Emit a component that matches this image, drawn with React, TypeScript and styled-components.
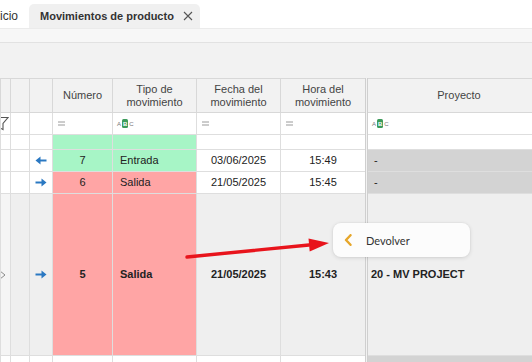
import React from "react";
import styled, { createGlobalStyle } from "styled-components";

const GlobalStyle = createGlobalStyle`
  html, body { margin: 0; padding: 0; background: #ffffff; }
  body { font-family: "Liberation Sans", Arial, sans-serif; color: #333; }
`;

const Page = styled.div`
  position: relative;
  width: 532px;
  height: 362px;
  overflow: hidden;
  display: flex;
  flex-direction: column;
  background: #f2f2f2;
`;

const TabBar = styled.div`
  flex: none;
  height: 29px;
  box-sizing: border-box;
  background: #ffffff;
  border-bottom: 1px solid #ebebeb;
  display: flex;
  align-items: flex-end;
  gap: 11px;
`;

const Tab = styled.div<{ $active?: boolean }>`
  height: 24px;
  display: flex;
  align-items: center;
  gap: 9px;
  font-size: ${(p) => (p.$active ? "11px" : "12px")};
  font-weight: ${(p) => (p.$active ? 700 : 400)};
  color: #333;
  white-space: nowrap;
  background: ${(p) => (p.$active ? "#f0f0f0" : "transparent")};
  border-radius: 5px 5px 0 0;
  padding: ${(p) => (p.$active ? "0 7px 0 11px" : "0")};
  margin-left: ${(p) => (p.$active ? "0" : "-10px")};
`;

const Strip = styled.div`
  flex: none;
  height: 14px;
  box-sizing: border-box;
  background: #f7f7f7;
  border-bottom: 1px solid #e2e2e2;
`;

const Toolbar = styled.div`
  flex: none;
  height: 35px;
  background: #f2f2f2;
`;

const Table = styled.table`
  border-collapse: collapse;
  table-layout: fixed;
  width: 550px;
  font-size: 11px;
  color: #222;
`;

const Row = styled.tr<{ $h: number }>`
  height: ${(p) => p.$h}px;
`;

const HeadCell = styled.th<{ $sep?: boolean }>`
  background: #f2f2f2;
  border: 1px solid #d8d8d8;
  ${(p) => (p.$sep ? "border-left: 3px double #cfcfcf;" : "")}
  font-weight: 400;
  font-size: 11px;
  line-height: 13px;
  color: #444;
  text-align: center;
  vertical-align: middle;
  padding: 0 2px;
  overflow: hidden;
`;

const Cell = styled.td<{
  $bg?: string;
  $bold?: boolean;
  $align?: string;
  $sep?: boolean;
  $pad?: number;
}>`
  background: ${(p) => p.$bg || "#ffffff"};
  border: 1px solid #dedede;
  ${(p) => (p.$sep ? "border-left: 3px double #cfcfcf;" : "")}
  font-weight: ${(p) => (p.$bold ? 700 : 400)};
  text-align: ${(p) => p.$align || "left"};
  padding: 0 ${(p) => p.$pad ?? 6}px;
  vertical-align: middle;
  white-space: nowrap;
  overflow: hidden;
  line-height: 13px;
`;

const IconCell = styled.td<{ $bg?: string }>`
  background: ${(p) => p.$bg || "#ffffff"};
  border: 1px solid #dedede;
  padding: 0;
  text-align: center;
  vertical-align: middle;
  overflow: hidden;
  line-height: 0;
`;

const Clipped = styled.span<{ $shift: number }>`
  display: inline-block;
  margin-left: ${(p) => p.$shift}px;
  line-height: 0;
  vertical-align: middle;
`;

const FilterRowCell = styled.td<{ $sep?: boolean }>`
  background: #ffffff;
  border: 1px solid #dedede;
  ${(p) => (p.$sep ? "border-left: 3px double #cfcfcf;" : "")}
  padding: 0 0 0 4px;
  vertical-align: middle;
  line-height: 0;
  overflow: hidden;
`;

const AbcBadge = styled.span`
  display: inline-flex;
  align-items: center;
  gap: 1px;
  font-size: 6px;
  line-height: 8px;
  color: #777;
  font-family: "Liberation Sans", Arial, sans-serif;
`;

const AbcBox = styled.span`
  display: inline-block;
  background: #3c9a5a;
  color: #fff;
  border-radius: 1.5px;
  padding: 0.5px 1px;
  font-weight: 700;
`;

const Overlay = styled.svg`
  position: absolute;
  left: 0;
  top: 0;
  pointer-events: none;
`;

const Menu = styled.div`
  position: absolute;
  left: 333px;
  top: 223px;
  width: 137px;
  height: 34px;
  box-sizing: border-box;
  background: #fcfcfc;
  border-radius: 8px;
  box-shadow: 0 1px 4px rgba(0, 0, 0, 0.12), 0 0 0 1px rgba(0, 0, 0, 0.02);
  display: flex;
  align-items: center;
  padding-left: 11px;
  gap: 14px;
  font-family: Lato, "Open Sans", sans-serif;
  font-size: 11px;
  color: #333;
`;

const cols = [10, 19, 23, 60, 84, 84, 86, 184];

type Kind = "in" | "out" | "none";
type RowData = {
  h: number;
  arrow: "left" | "right" | null;
  num: string;
  tipo: string;
  fecha: string;
  hora: string;
  proy: string;
  kind: Kind;
  projBg: string;
  selected?: boolean;
};

const rows: RowData[] = [
  { h: 15, arrow: null, num: "", tipo: "", fecha: "", hora: "", proy: "", kind: "in", projBg: "#ffffff" },
  { h: 22, arrow: "left", num: "7", tipo: "Entrada", fecha: "03/06/2025", hora: "15:49", proy: "-", kind: "in", projBg: "#d3d3d3" },
  { h: 22, arrow: "right", num: "6", tipo: "Salida", fecha: "21/05/2025", hora: "15:45", proy: "-", kind: "out", projBg: "#d3d3d3" },
  { h: 162, arrow: "right", num: "5", tipo: "Salida", fecha: "21/05/2025", hora: "15:43", proy: "20 - MV PROJECT", kind: "out", projBg: "#efefef", selected: true },
  { h: 24, arrow: "right", num: "4", tipo: "Entrada", fecha: "21/05/2025", hora: "15:42", proy: "-", kind: "none", projBg: "#d3d3d3" },
];

const kindBg: Record<Kind, string> = { in: "#a7f5c6", out: "#ffa5a5", none: "#ffffff" };

const Arrow = ({ dir }: { dir: "left" | "right" }) => (
  <svg width="12" height="9" viewBox="0 0 12 9" style={{ transform: dir === "left" ? "scaleX(-1)" : undefined }}>
    <path d="M0.5 4.5H8" stroke="#2a78c2" strokeWidth="2" />
    <path d="M6.5 0.5L11.5 4.5L6.5 8.5Z" fill="#2a78c2" />
  </svg>
);

const EqualIcon = () => (
  <svg width="9" height="5" viewBox="0 0 9 5">
    <path d="M1 1H8M1 4H8" stroke="#9a9a9a" strokeWidth="1" />
  </svg>
);

const Abc = () => (
  <AbcBadge>
    <span>A</span>
    <AbcBox>B</AbcBox>
    <span>C</span>
  </AbcBadge>
);

export default function App() {
  return (
    <>
      <GlobalStyle />
      <Page>
        <TabBar>
          <Tab>Inicio</Tab>
          <Tab $active>
            Movimientos de producto
            <svg width="10" height="10" viewBox="0 0 10 10">
              <path d="M1 1L9 9M9 1L1 9" stroke="#555" strokeWidth="1.1" />
            </svg>
          </Tab>
        </TabBar>
        <Strip />
        <Toolbar />
        <Table>
          <colgroup>
            {cols.map((w, i) => (
              <col key={i} style={{ width: w }} />
            ))}
          </colgroup>
          <thead>
            <Row $h={34}>
              <HeadCell />
              <HeadCell />
              <HeadCell />
              <HeadCell>Número</HeadCell>
              <HeadCell>
                Tipo de
                <br />
                movimiento
              </HeadCell>
              <HeadCell>
                Fecha del
                <br />
                movimiento
              </HeadCell>
              <HeadCell>
                Hora del
                <br />
                movimiento
              </HeadCell>
              <HeadCell $sep>Proyecto</HeadCell>
            </Row>
            <Row $h={22}>
              <IconCell>
                <Clipped $shift={-9}>
                  <svg width="16" height="15" viewBox="0 0 16 15">
                    <path d="M1 1.5H15L10 7.5V13.5L6 11.5V7.5Z" stroke="#555" strokeWidth="1.1" fill="none" />
                  </svg>
                </Clipped>
              </IconCell>
              <IconCell />
              <IconCell />
              <FilterRowCell>
                <EqualIcon />
              </FilterRowCell>
              <FilterRowCell>
                <Abc />
              </FilterRowCell>
              <FilterRowCell>
                <EqualIcon />
              </FilterRowCell>
              <FilterRowCell>
                <EqualIcon />
              </FilterRowCell>
              <FilterRowCell $sep>
                <Abc />
              </FilterRowCell>
            </Row>
          </thead>
          <tbody>
            {rows.map((r, i) => {
              const side = r.selected ? "#efefef" : "#ffffff";
              return (
                <Row key={i} $h={r.h}>
                  <IconCell $bg={r.selected ? "#f5f5f5" : "#ffffff"}>
                    {r.selected && (
                      <Clipped $shift={-6}>
                        <svg width="8" height="10" viewBox="0 0 8 10">
                          <path d="M1 1L6 5L1 9" stroke="#8a8a8a" strokeWidth="1" fill="none" />
                        </svg>
                      </Clipped>
                    )}
                  </IconCell>
                  <IconCell $bg={side} />
                  <IconCell $bg={side}>{r.arrow && <Arrow dir={r.arrow} />}</IconCell>
                  <Cell $bg={kindBg[r.kind]} $align="center" $bold={r.selected}>
                    {r.num}
                  </Cell>
                  <Cell $bg={kindBg[r.kind]} $bold={r.selected} $pad={7}>
                    {r.tipo}
                  </Cell>
                  <Cell $bg={side} $align="center" $bold={r.selected}>
                    {r.fecha}
                  </Cell>
                  <Cell $bg={side} $align="center" $bold={r.selected}>
                    {r.hora}
                  </Cell>
                  <Cell $sep $bg={r.projBg} $bold={r.selected} $pad={r.selected ? 3 : 6}>
                    {r.proy}
                  </Cell>
                </Row>
              );
            })}
          </tbody>
        </Table>
        <Overlay width="532" height="362" viewBox="0 0 532 362">
          <path d="M187 257L309 245" stroke="#e8141c" strokeWidth="3.4" strokeLinecap="round" />
          <path d="M329 243L309.7 251.5L308.5 238.5Z" fill="#e8141c" />
        </Overlay>
        <Menu>
          <svg width="8" height="12" viewBox="0 0 8 12">
            <path d="M6.5 1.2L2 6L6.5 10.8" stroke="#e6a62a" strokeWidth="2.4" fill="none" strokeLinecap="round" strokeLinejoin="round" />
          </svg>
          Devolver
        </Menu>
      </Page>
    </>
  );
}
